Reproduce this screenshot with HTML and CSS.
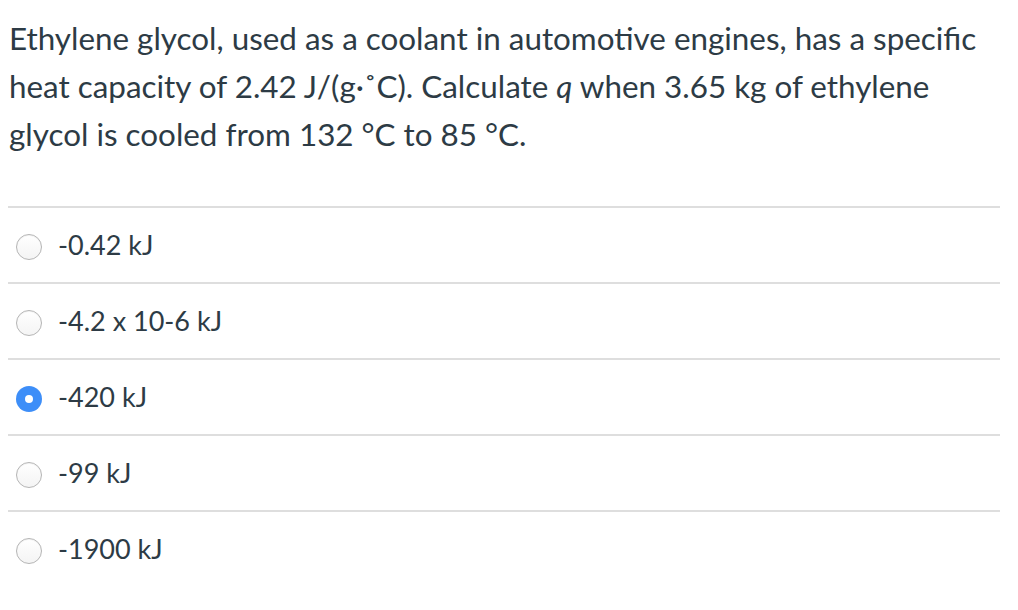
FILE: index.html
```html
<!DOCTYPE html>
<html>
<head>
<meta charset="utf-8">
<link rel="stylesheet" href="styles.css">
</head>
<body>
<div class="quiz">
  <div class="question">Ethylene glycol, used as a coolant in automotive engines, has a specific heat capacity of 2.42 J/(g·˚C). Calculate <em>q</em> when 3.65 kg of ethylene glycol is cooled from 132 °C to 85 °C.</div>
  <div class="answers">
    <div class="answer"><span class="radio"></span><span class="label">-0.42 kJ</span></div>
    <div class="answer"><span class="radio"></span><span class="label">-4.2 x 10-6 kJ</span></div>
    <div class="answer"><span class="radio checked"></span><span class="label">-420 kJ</span></div>
    <div class="answer"><span class="radio"></span><span class="label">-99 kJ</span></div>
    <div class="answer"><span class="radio"></span><span class="label">-1900 kJ</span></div>
  </div>
</div>
</body>
</html>
```
FILE: styles.css
```css
html, body {
  margin: 0;
  padding: 0;
  background: #ffffff;
}
body {
  font-family: Lato, "Liberation Sans", sans-serif;
  color: #2d3b45;
}
.quiz {
  padding: 14px 18px 0 8px;
}
.question {
  font-size: 31.4px;
  line-height: 48px;
  padding-left: 1px;
  margin-bottom: 48px;
}
.question em {
  font-style: italic;
}
.answer {
  display: flex;
  align-items: center;
  gap: 16px;
  height: 74px;
  border-top: 2px solid #dedede;
  padding-left: 8px;
  font-size: 27px;
}
.radio {
  width: 26px;
  height: 26px;
  border-radius: 50%;
  box-sizing: border-box;
  border: 1px solid #b5b5b5;
  background: linear-gradient(#ffffff, #f4f4f4);
  box-shadow: inset 0 1px 1px rgba(0,0,0,0.05);
  position: relative;
  flex: none;
  margin-top: 4px;
}
.radio.checked {
  border: none;
  background: #3d8ef8;
  box-shadow: none;
}
.radio.checked::after {
  content: "";
  position: absolute;
  left: 9px;
  top: 9px;
  width: 8px;
  height: 8px;
  border-radius: 50%;
  background: #ffffff;
}
.label {
  line-height: 30px;
}
```
